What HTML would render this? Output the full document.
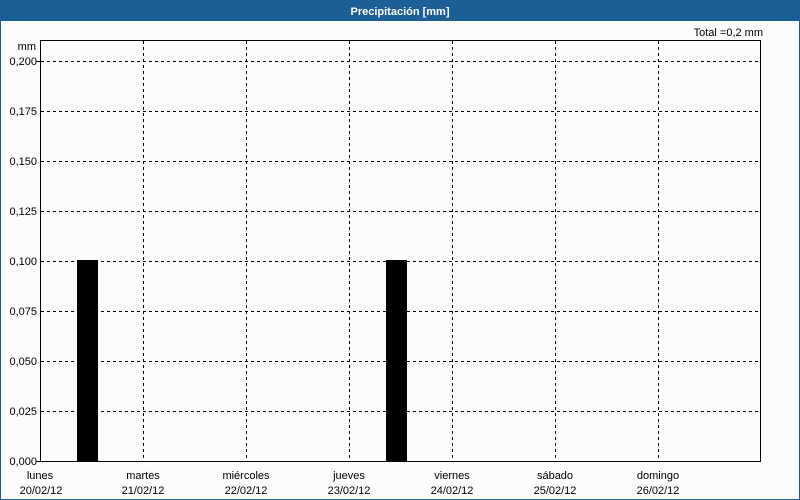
<!DOCTYPE html>
<html><head><meta charset="utf-8"><style>
html,body{margin:0;padding:0;width:800px;height:500px;overflow:hidden;background:#fcfcfc}
svg{display:block}
text{font-family:"Liberation Sans","DejaVu Sans",sans-serif;font-size:11px;fill:#000}
</style></head><body>
<svg width="800" height="500" xmlns="http://www.w3.org/2000/svg">
<rect x="0" y="0" width="800" height="500" fill="#fcfcfc"/>
<rect x="0.5" y="0.5" width="799" height="499" fill="none" stroke="#1c5f96"/>
<rect x="0" y="0" width="800" height="21" fill="#1c5f96"/>
<text x="400" y="15" text-anchor="middle" style="font-weight:bold;fill:#fff">Precipitación [mm]</text>
<text x="763" y="36" text-anchor="end">Total =0,2 mm</text>
<text x="36" y="50" text-anchor="end">mm</text>
<g stroke="#000" stroke-dasharray="3,3" stroke-width="1">
<line x1="41" y1="61.5" x2="760" y2="61.5"/>
<line x1="41" y1="111.5" x2="760" y2="111.5"/>
<line x1="41" y1="161.5" x2="760" y2="161.5"/>
<line x1="41" y1="211.5" x2="760" y2="211.5"/>
<line x1="41" y1="261.5" x2="760" y2="261.5"/>
<line x1="41" y1="311.5" x2="760" y2="311.5"/>
<line x1="41" y1="361.5" x2="760" y2="361.5"/>
<line x1="41" y1="411.5" x2="760" y2="411.5"/>
<line x1="143.5" y1="41" x2="143.5" y2="462"/>
<line x1="246.5" y1="41" x2="246.5" y2="462"/>
<line x1="349.5" y1="41" x2="349.5" y2="462"/>
<line x1="452.5" y1="41" x2="452.5" y2="462"/>
<line x1="555.5" y1="41" x2="555.5" y2="462"/>
<line x1="658.5" y1="41" x2="658.5" y2="462"/>
</g>
<g stroke="#000"><line x1="36" y1="61.5" x2="40" y2="61.5"/><line x1="36" y1="461.5" x2="40" y2="461.5"/></g>
<rect x="40.5" y="40.5" width="720" height="421" fill="none" stroke="#000"/>
<rect x="77" y="260" width="21" height="202" fill="#000"/>
<rect x="386" y="260" width="21" height="202" fill="#000"/>
<g text-anchor="end">
<text x="37" y="65">0,200</text>
<text x="37" y="115">0,175</text>
<text x="37" y="165">0,150</text>
<text x="37" y="215">0,125</text>
<text x="37" y="265">0,100</text>
<text x="37" y="315">0,075</text>
<text x="37" y="365">0,050</text>
<text x="37" y="415">0,025</text>
<text x="37" y="465">0,000</text>
</g>
<g text-anchor="middle">
<text x="40" y="479">lunes</text><text x="41" y="494">20/02/12</text>
<text x="143" y="479">martes</text><text x="143" y="494">21/02/12</text>
<text x="246" y="479">miércoles</text><text x="246" y="494">22/02/12</text>
<text x="349" y="479">jueves</text><text x="349" y="494">23/02/12</text>
<text x="452" y="479">viernes</text><text x="452" y="494">24/02/12</text>
<text x="555" y="479">sábado</text><text x="555" y="494">25/02/12</text>
<text x="658" y="479">domingo</text><text x="658" y="494">26/02/12</text>
</g>
</svg>
</body></html>
